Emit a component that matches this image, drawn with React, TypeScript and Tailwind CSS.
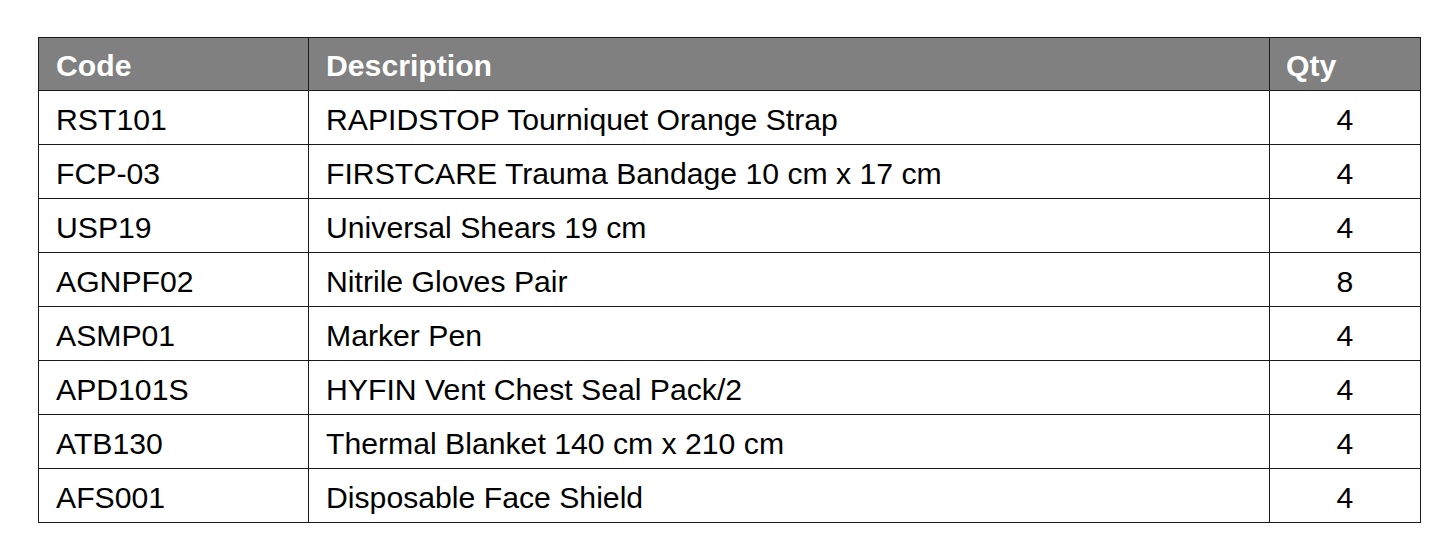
const items = [
  { code: 'RST101', desc: 'RAPIDSTOP Tourniquet Orange Strap', qty: 4 },
  { code: 'FCP-03', desc: 'FIRSTCARE Trauma Bandage 10 cm x 17 cm', qty: 4 },
  { code: 'USP19', desc: 'Universal Shears 19 cm', qty: 4 },
  { code: 'AGNPF02', desc: 'Nitrile Gloves Pair', qty: 8 },
  { code: 'ASMP01', desc: 'Marker Pen', qty: 4 },
  { code: 'APD101S', desc: 'HYFIN Vent Chest Seal Pack/2', qty: 4 },
  { code: 'ATB130', desc: 'Thermal Blanket 140 cm x 210 cm', qty: 4 },
  { code: 'AFS001', desc: 'Disposable Face Shield', qty: 4 },
]

export default function App() {
  return (
    <div className="min-h-[550px] bg-white pl-[38px] pt-[37px] font-['Liberation_Sans',Arial,sans-serif] text-[30.2px] text-black">
      <table className="w-[1383px] table-fixed border-collapse border border-[#1a1a1a]">
        <colgroup>
          <col className="w-[270px]" />
          <col className="w-[961px]" />
          <col className="w-[151px]" />
        </colgroup>
        <thead>
          <tr className="h-[53px] bg-[#808080] text-white">
            <th className="border border-[#1a1a1a] pl-[17px] pt-[3px] text-left font-bold">Code</th>
            <th className="border border-[#1a1a1a] pl-[17px] pt-[3px] text-left font-bold">Description</th>
            <th className="border border-[#1a1a1a] pl-[16px] pt-[3px] text-left font-bold">Qty</th>
          </tr>
        </thead>
        <tbody>
          {items.map((it) => (
            <tr key={it.code} className="h-[54px]">
              <td className="border border-[#1a1a1a] pl-[17px] pt-[4px]">{it.code}</td>
              <td className="border border-[#1a1a1a] pl-[17px] pt-[4px]">{it.desc}</td>
              <td className="border border-[#1a1a1a] pt-[4px] text-center">{it.qty}</td>
            </tr>
          ))}
        </tbody>
      </table>
    </div>
  )
}
